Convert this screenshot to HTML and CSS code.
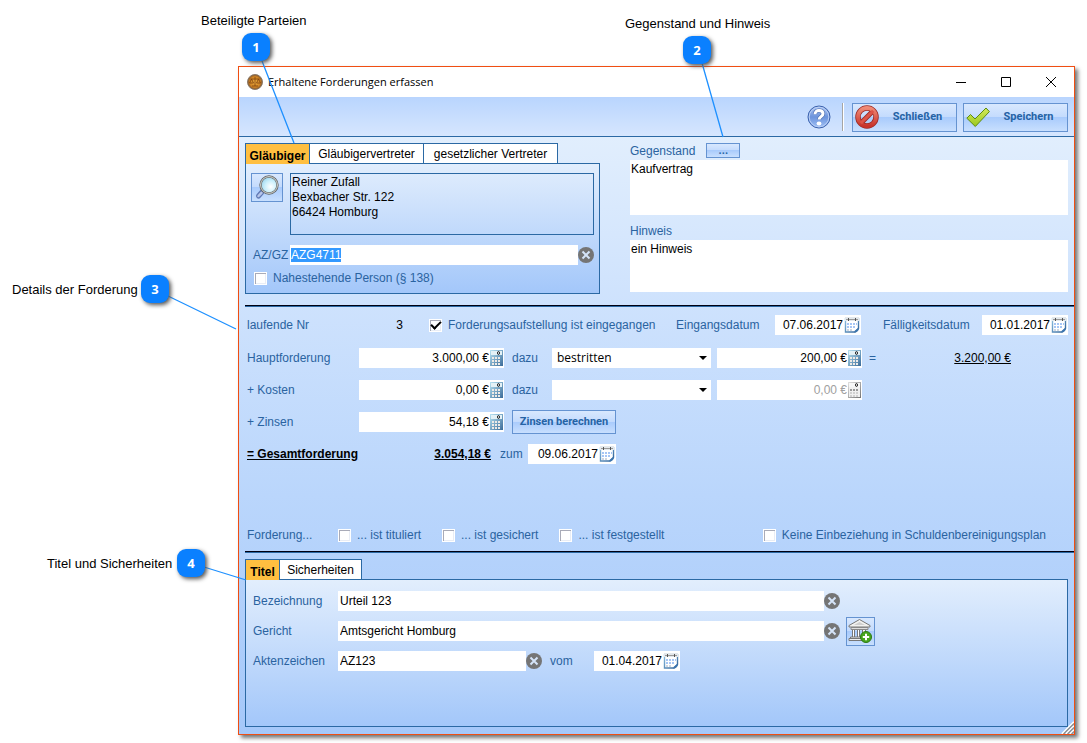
FILE: index.html
```
<!DOCTYPE html>
<html lang="de">
<head>
<meta charset="utf-8">
<title>Erhaltene Forderungen erfassen</title>
<link rel="stylesheet" href="styles.css">
</head>
<body>
<svg class="defs" width="0" height="0" aria-hidden="true">
  <defs>
    <linearGradient id="gCal" x1="0" y1="0" x2="1" y2="1"><stop offset="0" stop-color="#8fc1e2"/><stop offset="1" stop-color="#2c5f96"/></linearGradient>
    <linearGradient id="gCalc" x1="0" y1="0" x2="1" y2="1"><stop offset="0" stop-color="#b5e0f0"/><stop offset="1" stop-color="#3f6f9c"/></linearGradient>
    <linearGradient id="gCalcOff" x1="0" y1="0" x2="1" y2="1"><stop offset="0" stop-color="#dedede"/><stop offset="1" stop-color="#777"/></linearGradient>
    <radialGradient id="gLens" cx=".6" cy=".6" r=".7"><stop offset="0" stop-color="#fff"/><stop offset=".5" stop-color="#c9effb"/><stop offset="1" stop-color="#8ecdea"/></radialGradient>
    <linearGradient id="gHelp" x1="0" y1="0" x2="0" y2="1"><stop offset="0" stop-color="#a9c3f2"/><stop offset=".5" stop-color="#6d94dc"/><stop offset="1" stop-color="#9fc0f5"/></linearGradient>
    <linearGradient id="gStop" x1="0" y1="0" x2="0" y2="1"><stop offset="0" stop-color="#f08a76"/><stop offset="1" stop-color="#c8342c"/></linearGradient>
    <linearGradient id="gTick" x1="0" y1="0" x2="0" y2="1"><stop offset="0" stop-color="#d3ea5c"/><stop offset="1" stop-color="#9cc81e"/></linearGradient>
    <radialGradient id="gGold"><stop offset="0" stop-color="#f0b040"/><stop offset=".7" stop-color="#cf8424"/><stop offset="1" stop-color="#7a5230"/></radialGradient>
    <symbol id="calendar" viewBox="0 0 16 16">
      <path d="M1.500 1v14h9.500l3.500-3.500V1" fill="#fff" stroke="url(#gCal)" stroke-width="1.400"/>
      <path d="M10.500 15.500v-1.500l3.500-3 1 .5c0 2-2 4-4.500 4z" fill="#3c74ad"/>
      <path d="M1 0h14v4H1z" fill="#e3e8ec"/>
      <path d="M2 2.500h12" stroke="#9a9a9a"/><path d="M4.500 1v3M11.500 1v3" stroke="#555"/>
      <path d="M3 6h2v2H3zM6 6h2v2H6zM9 6h2v2H9zM12 6h1v2h-1zM3 9h2v2H3zM6 9h2v2H6zM9 9h2v2H9z" fill="#a6c6f5"/>
      <path d="M3 12h2v2H3zM6 12h2v2H6z" fill="#cfd6df"/>
    </symbol>
    <symbol id="calculator" viewBox="0 0 13 16">
      <rect x=".5" y=".5" width="12" height="15" fill="url(#gCalc)" stroke="url(#gCalc)"/>
      <path d="M1 1h11v4H1z" fill="#e3f1f6"/><ellipse cx="8.500" cy="3" rx="1" ry="1.500" fill="none" stroke="#222"/>
      <path d="M2 7h2v2H2zM5 7h2v2H5zM8 7h2v2H8zM2 10h2v2H2zM5 10h2v2H5zM8 10h2v2H8zM2 13h2v2H2zM5 13h2v2H5zM8 13h2v2H8z" fill="#eeeae6"/>
    </symbol>
    <symbol id="calculator-off" viewBox="0 0 13 16">
      <rect x=".5" y=".5" width="12" height="15" fill="#f1f1f1" stroke="url(#gCalcOff)"/>
      <path d="M1 1h11v4H1z" fill="#f7f7f7"/><ellipse cx="8.500" cy="3" rx="1" ry="1.500" fill="none" stroke="#222"/>
      <path d="M2 7h2v2H2zM5 7h2v2H5zM8 7h2v2H8z" fill="#999"/><path d="M2 10h2v2H2zM5 10h2v2H5zM8 10h2v2H8zM2 13h2v2H2zM5 13h2v2H5zM8 13h2v2H8z" fill="#d2d2d2"/>
    </symbol>
    <symbol id="clear" viewBox="0 0 16 16">
      <circle cx="8" cy="8" r="8" fill="#757575"/><path d="M4.500 4.500l7 7M11.500 4.500l-7 7" stroke="#d5e4f8" stroke-width="2"/>
    </symbol>
  </defs>
</svg>

<main class="window">
  <header class="titlebar">
    <svg width="16" height="16" viewBox="0 0 16 16" aria-hidden="true"><circle cx="8" cy="8" r="7.500" fill="url(#gGold)" stroke="#8a7a6a"/><path d="M8 3v9M3.500 5h9M5 12h6M2.500 9h4M9.500 9h4M4.500 5l-2 4M4.500 5l2 4M11.500 5l-2 4M11.500 5l2 4" stroke="#7d4210" stroke-width=".8" fill="none"/></svg>
    <h1 class="title">Erhaltene Forderungen erfassen</h1>
    <button class="winbtn" type="button" aria-label="Minimieren"><svg width="12" height="12" viewBox="0 0 12 12"><path d="M1 6.500h10" stroke="#000"/></svg></button>
    <button class="winbtn" type="button" aria-label="Maximieren"><svg width="12" height="12" viewBox="0 0 12 12"><path d="M1.500 1.500h9v9h-9z" stroke="#000" fill="none"/></svg></button>
    <button class="winbtn" type="button" aria-label="Fenster schließen"><svg width="12" height="12" viewBox="0 0 12 12"><path d="M1 1l10 10M11 1L1 11" stroke="#000"/></svg></button>
  </header>

  <div class="toolbar">
    <button class="help" type="button" aria-label="Hilfe"><svg width="24" height="24" viewBox="0 0 24 24"><circle cx="12" cy="12" r="11" fill="url(#gHelp)" stroke="#3c62ad"/><circle cx="12" cy="12" r="9.800" fill="none" stroke="#b9cff5"/><path d="M8 9.200C8 6.900 9.600 5.500 12 5.500s4 1.300 4 3.300c0 2.800-3.900 2.900-3.900 5.700" fill="none" stroke="#4a6cb0" stroke-width="4.200"/><path d="M8 9.200C8 6.900 9.600 5.500 12 5.500s4 1.300 4 3.300c0 2.800-3.900 2.900-3.900 5.700" fill="none" stroke="#fff" stroke-width="3"/><ellipse cx="12" cy="18.500" rx="2.400" ry="2" fill="#fff"/></svg></button>
    <span class="separator"></span>
    <button class="btn tool" type="button"><svg width="24" height="24" viewBox="0 0 24 24" aria-hidden="true"><circle cx="12" cy="12" r="9" fill="none" stroke="#9c2a26" stroke-width="5.500"/><path d="M6 18L18 6" stroke="#9c2a26" stroke-width="5"/><circle cx="12" cy="12" r="9" fill="none" stroke="url(#gStop)" stroke-width="3.800"/><path d="M5.800 18.200L18.200 5.800" stroke="#dd5448" stroke-width="3.200"/></svg><span>Schließen</span></button>
    <button class="btn tool" type="button"><svg width="24" height="24" viewBox="0 0 24 24" aria-hidden="true"><path d="M.8 13.200L4.500 9.500 9 14 20 3l3.400 3.600L9.300 21.500z" fill="url(#gTick)" stroke="#5d8a12"/></svg><span>Speichern</span></button>
  </div>

  <form class="content" onsubmit="return false">
    <section class="top">
      <div class="parties">
        <div class="tabs">
          <button class="tab active" type="button">Gläubiger</button>
          <button class="tab mid" type="button">Gläubigervertreter</button>
          <button class="tab wide" type="button">gesetzlicher Vertreter</button>
        </div>
        <div class="panel creditor">
          <button class="btn search" type="button" aria-label="Gläubiger suchen"><svg width="28" height="26" viewBox="0 0 28 26"><path d="M9 17L5.500 21" stroke="#6079b5" stroke-width="5" stroke-linecap="round"/><path d="M8.500 17.800L5.500 21" stroke="#b7c6ea" stroke-width="2.500" stroke-linecap="round"/><circle cx="16" cy="10" r="8.500" fill="url(#gLens)" stroke="#5f6568" stroke-width="2.400"/><circle cx="16" cy="10" r="8.400" fill="none" stroke="#d9d9d2"/></svg></button>
          <div class="address">Reiner Zufall<br>Bexbacher Str. 122<br>66424 Homburg</div>
          <label for="azgz">AZ/GZ</label>
          <div class="clearable"><input class="text" id="azgz" type="text" value="AZG4711"><button class="clear" type="button" aria-label="AZ/GZ löschen"><svg width="16" height="16"><use href="#clear"/></svg></button></div>
          <label class="check span"><input type="checkbox">Nahestehende Person (§ 138)</label>
        </div>
      </div>
      <div class="notes">
        <div class="notehead"><label for="subject">Gegenstand</label><button class="btn more" type="button">...</button></div>
        <textarea class="area" id="subject">Kaufvertrag</textarea>
        <div class="notehead second"><label for="hint">Hinweis</label></div>
        <textarea class="area short" id="hint">ein Hinweis</textarea>
      </div>
    </section>

    <section class="details">
      <div class="line first">
        <span class="name">laufende Nr</span><span class="number">3</span>
        <label class="check received"><input type="checkbox" checked>Forderungsaufstellung ist eingegangen</label>
        <div class="dates">
          <label class="datename" for="d1">Eingangsdatum</label>
          <span class="field date"><input id="d1" type="text" value="07.06.2017"><svg width="16" height="16"><use href="#calendar"/></svg></span>
          <label class="datename due" for="d2">Fälligkeitsdatum</label>
          <span class="field date"><input id="d2" type="text" value="01.01.2017"><svg width="16" height="16"><use href="#calendar"/></svg></span>
        </div>
      </div>
      <div class="line">
        <label class="name" for="m1">Hauptforderung</label>
        <span class="field money"><input id="m1" type="text" value="3.000,00 €"><svg width="13" height="16"><use href="#calculator"/></svg></span>
        <label class="plus" for="s1">dazu</label>
        <span class="dropdown"><select class="choice" id="s1"><option>bestritten</option></select></span>
        <span class="field money"><input type="text" aria-label="Betrag bestritten" value="200,00 €"><svg width="13" height="16"><use href="#calculator"/></svg></span>
        <span class="equals">=</span><output class="sum">3.200,00 €</output>
      </div>
      <div class="line">
        <label class="name" for="m2">+ Kosten</label>
        <span class="field money"><input id="m2" type="text" value="0,00 €"><svg width="13" height="16"><use href="#calculator"/></svg></span>
        <label class="plus" for="s2">dazu</label>
        <span class="dropdown"><select class="choice" id="s2"><option></option></select></span>
        <span class="field money"><input type="text" aria-label="Betrag Kosten" value="0,00 €" disabled><svg width="13" height="16"><use href="#calculator-off"/></svg></span>
      </div>
      <div class="line">
        <label class="name" for="m3">+ Zinsen</label>
        <span class="field money"><input id="m3" type="text" value="54,18 €"><svg width="13" height="16"><use href="#calculator"/></svg></span>
        <button class="btn interest" type="button">Zinsen berechnen</button>
      </div>
      <div class="line">
        <span class="name total">= Gesamtforderung</span><output class="grand total">3.054,18 €</output>
        <label class="asof" for="d3">zum</label>
        <span class="field date asofdate"><input id="d3" type="text" value="09.06.2017"><svg width="16" height="16"><use href="#calendar"/></svg></span>
      </div>
      <div class="line flags">
        <span class="flagname">Forderung...</span>
        <label class="check"><input type="checkbox">... ist tituliert</label>
        <label class="check"><input type="checkbox">... ist gesichert</label>
        <label class="check"><input type="checkbox">... ist festgestellt</label>
        <label class="check exclude"><input type="checkbox">Keine Einbeziehung in Schuldenbereinigungsplan</label>
      </div>
    </section>

    <section class="titles">
      <div class="tabs">
        <button class="tab active small" type="button">Titel</button>
        <button class="tab securities" type="button">Sicherheiten</button>
      </div>
      <div class="panel deed">
        <div class="row"><label class="rowname" for="t1">Bezeichnung</label><div class="clearable"><input class="text" id="t1" type="text" value="Urteil 123"><button class="clear" type="button" aria-label="Bezeichnung löschen"><svg width="16" height="16"><use href="#clear"/></svg></button></div></div>
        <div class="row"><label class="rowname" for="t2">Gericht</label><div class="clearable"><input class="text" id="t2" type="text" value="Amtsgericht Homburg"><button class="clear" type="button" aria-label="Gericht löschen"><svg width="16" height="16"><use href="#clear"/></svg></button></div>
          <button class="btn court" type="button" aria-label="Gericht hinzufügen"><svg width="27" height="27" viewBox="0 0 27 27"><path d="M2 7.500L12.500 1.500 23 7.500V9H2z" fill="#f1f1ef" stroke="#777"/><path d="M7 7l5.500-3L18 7z" fill="#cfcfcf"/><path d="M4 9.500h17v2H4z" fill="#ddd" stroke="#888"/><path d="M5.500 12v7M7.500 12v7M10.500 12v7M12.500 12v7M15.500 12v7M18.500 12v7" stroke="#777"/><path d="M6 12h1v7H6zM11 12h1v7h-1zM16 12h2v7h-2z" fill="#fff"/><path d="M3.500 19h17v1.500h-17zM2 20.500h19v2H2z" fill="#eee" stroke="#777"/><circle cx="19" cy="19" r="5.500" fill="#47a61e" stroke="#2c7a12"/><path d="M19 15.800v6.400M15.800 19h6.400" stroke="#fff" stroke-width="2"/></svg></button></div>
        <div class="row"><label class="rowname" for="t3">Aktenzeichen</label><div class="clearable filenumber"><input class="text" id="t3" type="text" value="AZ123"><button class="clear" type="button" aria-label="Aktenzeichen löschen"><svg width="16" height="16"><use href="#clear"/></svg></button></div>
          <label class="from" for="d4">vom</label><span class="field date"><input id="d4" type="text" value="01.04.2017"><svg width="16" height="16"><use href="#calendar"/></svg></span></div>
      </div>
    </section>
    <svg class="grip" width="13" height="13" viewBox="0 0 13 13" aria-hidden="true"><path d="M1 13L13 1M5 13l8-8M9 13l4-4" stroke="#fff" stroke-width="2"/><path d="M2.500 13L13 2.500M6.500 13L13 6.500M10.500 13l2.500-2.500" stroke="#8c8c8c" stroke-width="1.300"/></svg>
  </form>
</main>

<div class="callouts">
  <svg class="pointers" aria-hidden="true"><path d="M262 61L294 143M702 63L723 137M168 296L236 329M204 567L246 580" stroke="#1e90ff" stroke-width="1.300" fill="none"/></svg>
  <span class="note n1">Beteiligte Parteien</span><span class="badge b1">1</span>
  <span class="note n2">Gegenstand und Hinweis</span><span class="badge b2">2</span>
  <span class="note n3">Details der Forderung</span><span class="badge b3">3</span>
  <span class="note n4">Titel und Sicherheiten</span><span class="badge b4">4</span>
</div>
<script src="app.js"></script>
</body>
</html>
```
FILE: app.js
```
const reference = document.getElementById('azgz');
reference.focus();
reference.select();
```
FILE: styles.css
```
* { box-sizing: border-box; }
body { margin: 0; background: #fff; font: 12px/15px "Liberation Sans", Arial, sans-serif; color: #2a63a0; }
button, input, select, textarea { font: inherit; color: #000; margin: 0; border-radius: 0; outline: none; }
svg { display: block; flex: none; }
.defs { position: absolute; }

.window { margin: 66px 12px 8px 238px; border: 1px solid #f04e12; box-shadow: 3px 3px 4px #777; }

.titlebar { display: flex; align-items: center; height: 30px; padding: 0 6px 0 8px; background: #fff; }
.title { flex: 1; margin: 0 0 0 5px; font: 11px/16px "Open Sans", "Noto Sans", sans-serif; color: #000; }
.winbtn { display: grid; place-items: center; width: 45px; height: 28px; padding: 0; border: 0; background: none; }
.winbtn:last-child { width: 34px; margin-left: 6px; }

.toolbar { display: flex; align-items: center; justify-content: flex-end; gap: 6px; height: 40px; padding: 1px 6px 0; border-bottom: 1px solid #2b69a4; background: linear-gradient(#b9d5fe, #d6e6fe); }
.help { padding: 0; border: 0; background: none; }
.separator { width: 2px; height: 28px; margin: 0 2px 0 5px; background: #a5a5a5; border-right: 1px solid #fff; }

.btn { display: flex; align-items: center; justify-content: center; padding: 0; border: 1px solid #6593d1; color: #2563a5; font: bold 11px/14px Roboto, sans-serif; background: linear-gradient(#d8e8fe, #c4dbfd 48%, #a9cbfc 50%, #c8dffe); }
.tool { width: 105px; height: 29px; padding-left: 2px; justify-content: flex-start; }
.tool span { flex: 1; text-align: center; }

.content { position: relative; padding: 6px 0 7px 6px; background: linear-gradient(#e1eefd, #cee2fd 28%, #bad6fc 60%, #a5c8fa); }
.top { display: grid; grid-template-columns: 355px 1fr; gap: 30px; padding-right: 6px; }

.tabs { display: flex; height: 20px; }
.tab { height: 20px; padding: 0; border: 1px solid #2b69a4; border-left: 0; border-bottom: 0; background: #fff; line-height: 20px; white-space: nowrap; }
.tab.active { position: relative; width: 65px; height: 21px; padding: 2px 0 0; border-left: 1px solid #2b69a4; background: #ffbf40; font-weight: bold; }
.tab.active.small { width: 35px; }
.tab.mid { width: 114px; }
.tab.wide { width: 134px; }
.tab.securities { width: 82px; }
.panel { border: 1px solid #2b69a4; background: linear-gradient(#e2eefd, #a3c7fa); }

.creditor { display: grid; grid-template-columns: 39px 1fr; padding: 9px 5px 5px; align-items: center; }
.search { width: 32px; height: 29px; align-self: start; }
.address { height: 62px; padding: 1px 1px; border: 1px solid #2b69a4; color: #000; }
.creditor > label:not(.span) { margin: 10px 0 0 2px; }
.creditor .clearable { margin-top: 10px; }
.span { grid-column: span 2; height: 20px; margin-top: 3px; padding-left: 3px; }

.clearable { display: flex; align-items: center; flex: 1; }
.text { flex: 1; min-width: 0; height: 20px; padding: 0 1px; border: 0; background: #fff; }
.row .text { padding: 0 2px; }
.text::selection { background: #3399ff; color: #fff; }
.clear { padding: 0; border: 0; background: none; }

.check { display: flex; align-items: center; gap: 6px; white-space: nowrap; }
.check input { appearance: none; display: grid; place-items: center; width: 13px; height: 13px; background: #fff; border: 1px solid #fff; box-shadow: inset 1px 1px #a9abb8, inset -1px -1px #e9edf5; }
.check input:checked::after { content: ""; width: 8px; height: 4px; margin-bottom: 3px; border: solid #000; border-width: 0 0 2px 2px; transform: rotate(-45deg); }

.notehead { display: flex; align-items: center; gap: 11px; height: 15px; margin-bottom: 2px; }
.notehead.second { margin-top: 8px; }
.notehead label { padding-top: 1px; }
.more { width: 34px; height: 15px; }
.area { display: block; width: 100%; height: 55px; padding: 2px 1px; border: 0; background: #fff; resize: none; }
.area.short { height: 52px; }

.details { margin-top: 11px; padding: 9px 6px 7px 2px; border-top: 1px solid #001; border-bottom: 1px solid #2b69a4; box-shadow: inset 0 1px #2b69a4, inset 0 -1px #001; }
.line { display: flex; align-items: center; height: 20px; margin-bottom: 12px; }
.line.first { margin-bottom: 13px; }
.name { width: 112px; white-space: nowrap; }
.number { width: 44px; color: #000; text-align: right; }
.received { margin-left: 26px; }
.dates { display: flex; align-items: center; margin-left: auto; }
.datename { width: 99px; }
.due { margin-left: 22px; }

.field { display: flex; align-items: center; height: 20px; padding-right: 1px; background: #fff; }
.field input { flex: 1; min-width: 0; width: 0; height: 20px; padding: 0 1px 0 0; border: 0; background: none; text-align: right; }
.field input:disabled { color: #a0a0a0; }
.date { width: 86px; }
.money { width: 145px; }
.plus { width: 40px; margin-left: 8px; }
.dropdown { position: relative; width: 159px; margin-right: 6px; }
.dropdown::after { content: ""; position: absolute; right: 4px; top: 8px; border: solid transparent; border-width: 4px 4px 0; border-top-color: #000; pointer-events: none; }
.choice { display: block; width: 100%; height: 20px; padding: 0 5px; border: 0; appearance: none; font: 12px/20px "Open Sans", "Noto Sans", sans-serif; background: #fff; }
.equals { width: 20px; margin-left: 7px; }
.sum { width: 122px; text-align: right; color: #000; text-decoration: underline; }
.interest { width: 104px; height: 24px; margin-left: 8px; }
.total { color: #000; font-weight: bold; text-decoration: underline; }
.grand { width: 132px; text-align: right; }
.asof { width: 28px; margin-left: 9px; }
.asofdate { width: 88px; }
.flags { margin: 61px 0 0; gap: 21px; }
.flagname { width: 70px; }
.exclude { margin: 0 22px 0 auto; }

.titles { margin-top: 6px; padding-right: 6px; }
.deed { display: grid; gap: 10px; height: 148px; padding: 11px 5px 0 7px; align-content: start; }
.row { display: flex; align-items: center; height: 20px; }
.row .clearable { max-width: 502px; }
.rowname { width: 85px; }
.court { width: 29px; height: 29px; margin-left: 6px; }
.row .filenumber { max-width: 204px; }
.from { width: 44px; margin-left: 8px; }
.grip { position: absolute; right: 0; bottom: 0; }

.callouts { position: absolute; inset: 0; pointer-events: none; color: #000; }
.pointers { position: absolute; width: 100%; height: 100%; }
.note, .badge { position: absolute; white-space: nowrap; }
.note { font-size: 13px; }
.badge { width: 28px; height: 28px; border-radius: 9px; background: #0a80ff; box-shadow: 2px 2px 4px #555; color: #fff; font: bold 13px/28px "Open Sans", sans-serif; text-align: center; }
.n1 { left: 201px; top: 13px; }
.n2 { left: 625px; top: 16px; }
.n3 { left: 12px; top: 282px; }
.n4 { left: 47px; top: 556px; }
.b1 { left: 242px; top: 33px; }
.b2 { left: 683px; top: 36px; }
.b3 { left: 141px; top: 275px; }
.b4 { left: 177px; top: 549px; }
```
